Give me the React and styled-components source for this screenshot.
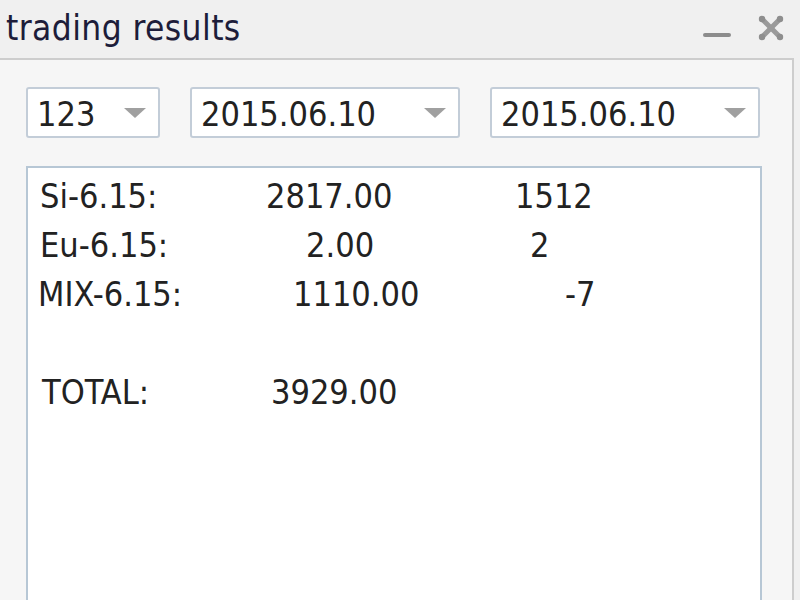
import React from "react";
import styled, { createGlobalStyle } from "styled-components";

const Global = createGlobalStyle`
  html, body { margin: 0; padding: 0; background: #f0f0f0; overflow: hidden; }
  body { font-family: "DejaVu Sans Condensed", "DejaVu Sans", sans-serif; font-stretch: semi-condensed; }
`;

const Window = styled.div`
  width: 800px;
  height: 600px;
  background: #f0f0f0;
  display: flex;
  flex-direction: column;
  overflow: hidden;
`;

const TitleBar = styled.div`
  height: 58px;
  flex: none;
  display: flex;
  align-items: flex-start;
  justify-content: space-between;
  padding-left: 6px;
  padding-right: 16px;
  box-sizing: border-box;
`;

const Title = styled.div`
  font-size: 35px;
  line-height: 35px;
  margin-top: 11px;
  color: #1d1d3a;
  letter-spacing: 0.4px;
`;

const Controls = styled.div`
  display: flex;
  align-items: flex-start;
  gap: 26px;
  padding-top: 15px;
`;

const Panel = styled.div`
  flex: 1;
  width: 794px;
  box-sizing: border-box;
  background: #f6f6f6;
  border-top: 2px solid #cdcdcd;
  border-right: 2px solid #cdcdcd;
  padding: 27px 30px 0 26px;
  display: flex;
  flex-direction: column;
  gap: 28px;
  min-height: 0;
`;

const Toolbar = styled.div`
  display: flex;
  gap: 30px;
  height: 51px;
  flex: none;
`;

const Select = styled.div`
  width: ${(p) => p.$w}px;
  height: 51px;
  box-sizing: border-box;
  background: #fff;
  border: 2px solid #c3cdd8;
  border-radius: 3px;
  display: flex;
  align-items: center;
  justify-content: space-between;
  padding: 0 12px 0 9px;
  font-size: 34px;
  color: #222;
`;

const SelectText = styled.span`
  line-height: 34px;
  margin-top: 2px;
`;

const Arrow = styled.span`
  width: 0;
  height: 0;
  border-left: 11px solid transparent;
  border-right: 11px solid transparent;
  border-top: 10px solid #a0a0a0;
  margin-top: 1px;
`;

const TextBox = styled.div`
  flex: 1;
  width: 736px;
  box-sizing: border-box;
  background: #fff;
  border: 2px solid #b7c7d5;
  border-bottom: none;
  padding: 4px 0 0 12px;
  font-size: 34px;
  line-height: 49px;
  color: #222;
`;

const Row = styled.div`
  display: flex;
  height: 49px;
  white-space: pre;
`;

const Cell = styled.span`
  flex: none;
  margin-left: ${(p) => p.$indent || 0}px;
  width: ${(p) => (p.$w ? `${p.$w}px` : "auto")};
`;

const rows = [
  [[40, "Si-6.15:"], [266, "2817.00"], [515, "1512"]],
  [[40, "Eu-6.15:"], [306, "2.00"], [530, "2"]],
  [[38, "MIX-6.15:"], [293, "1110.00"], [565, "-7"]],
  [],
  [[42, "TOTAL:"], [271, "3929.00"]],
];

function Minimize() {
  return (
    <svg width="30" height="24" viewBox="0 0 30 24">
      <line x1="3" y1="20" x2="27" y2="20" stroke="#8c8c8c" strokeWidth="4" strokeLinecap="round" />
    </svg>
  );
}

function Close() {
  return (
    <svg width="26" height="26" viewBox="0 0 26 26">
      <g stroke="#9a9a9a" strokeWidth="5" strokeLinecap="round">
        <line x1="4" y1="4" x2="22" y2="22" />
        <line x1="22" y1="4" x2="4" y2="22" />
      </g>
      <g fill="#8e8e8e">
        <circle cx="4" cy="4" r="3.2" />
        <circle cx="22" cy="4" r="3.2" />
        <circle cx="4" cy="22" r="3.2" />
        <circle cx="22" cy="22" r="3.2" />
      </g>
    </svg>
  );
}

const ROW_START = 40;

export default function App() {
  return (
    <>
      <Global />
      <Window>
        <TitleBar>
          <Title>trading results</Title>
          <Controls>
            <Minimize />
            <Close />
          </Controls>
        </TitleBar>
        <Panel>
          <Toolbar>
            <Select $w={134}>
              <SelectText>123</SelectText>
              <Arrow />
            </Select>
            <Select $w={270}>
              <SelectText>2015.06.10</SelectText>
              <Arrow />
            </Select>
            <Select $w={270}>
              <SelectText>2015.06.10</SelectText>
              <Arrow />
            </Select>
          </Toolbar>
          <TextBox>
            {rows.map((cells, i) => (
              <Row key={i}>
                {cells.length === 0 ? " " : null}
                {cells.map(([x, t], j) => {
                  const next = cells[j + 1];
                  return (
                    <Cell
                      key={j}
                      $indent={j === 0 ? x - ROW_START : 0}
                      $w={next ? next[0] - x : 0}
                    >
                      {t}
                    </Cell>
                  );
                })}
              </Row>
            ))}
          </TextBox>
        </Panel>
      </Window>
    </>
  );
}
